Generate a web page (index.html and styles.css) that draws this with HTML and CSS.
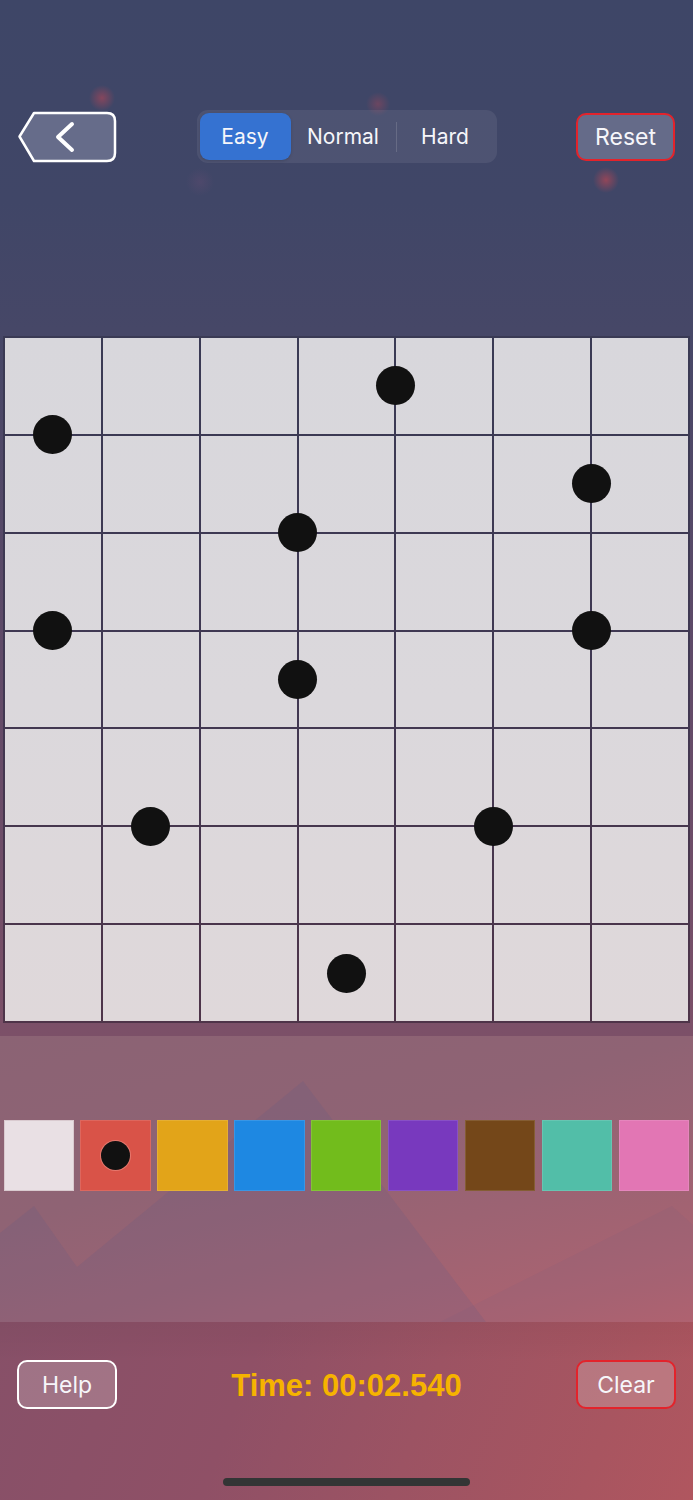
FILE: index.html
```html
<!DOCTYPE html>
<html lang="en">
<head>
<meta charset="utf-8">
<title>Dots Puzzle</title>
<link rel="stylesheet" href="styles.css">
</head>
<body>
<div class="app">
  <header class="header">
    <button class="back" aria-label="Back">
      <svg width="100" height="52" viewBox="0 0 100 52">
        <path d="M2.5,25.5 L17,2 H90 Q98,2 98,10 V42 Q98,50 90,50 H17 Z" fill="#666c8a" stroke="#ffffff" stroke-width="2.5" stroke-linejoin="round"/>
        <path d="M55,13 L41,26 L55,39" fill="none" stroke="#ffffff" stroke-width="4" stroke-linecap="round" stroke-linejoin="round"/>
      </svg>
    </button>
    <div class="segmented">
      <div class="seg seg-easy">Easy</div>
      <div class="seg seg-normal">Normal</div>
      <div class="seg-divider"></div>
      <div class="seg seg-hard">Hard</div>
    </div>
    <button class="btn btn-reset">Reset</button>
  </header>

  <main class="board">
    <div class="cell"></div><div class="cell"></div><div class="cell"></div><div class="cell"></div><div class="cell"></div><div class="cell"></div><div class="cell"></div>
    <div class="cell"></div><div class="cell"></div><div class="cell"></div><div class="cell"></div><div class="cell"></div><div class="cell"></div><div class="cell"></div>
    <div class="cell"></div><div class="cell"></div><div class="cell"></div><div class="cell"></div><div class="cell"></div><div class="cell"></div><div class="cell"></div>
    <div class="cell"></div><div class="cell"></div><div class="cell"></div><div class="cell"></div><div class="cell"></div><div class="cell"></div><div class="cell"></div>
    <div class="cell"></div><div class="cell"></div><div class="cell"></div><div class="cell"></div><div class="cell"></div><div class="cell"></div><div class="cell"></div>
    <div class="cell"></div><div class="cell"></div><div class="cell"></div><div class="cell"></div><div class="cell"></div><div class="cell"></div><div class="cell"></div>
    <div class="cell"></div><div class="cell"></div><div class="cell"></div><div class="cell"></div><div class="cell"></div><div class="cell"></div><div class="cell"></div>

    <span class="dot" style="--x:0.5;--y:1"></span>
    <span class="dot" style="--x:4;--y:0.5"></span>
    <span class="dot" style="--x:6;--y:1.5"></span>
    <span class="dot" style="--x:3;--y:2"></span>
    <span class="dot" style="--x:0.5;--y:3"></span>
    <span class="dot" style="--x:6;--y:3"></span>
    <span class="dot" style="--x:3;--y:3.5"></span>
    <span class="dot" style="--x:1.5;--y:5"></span>
    <span class="dot" style="--x:5;--y:5"></span>
    <span class="dot" style="--x:3.5;--y:6.5"></span>
  </main>

  <section class="panel">
    <svg class="mountains" viewBox="0 0 693 286" preserveAspectRatio="none" aria-hidden="true">
      <polygon points="0,197 34,170 77,231 303,45 486,286 0,286" fill="rgba(80,90,140,0.15)"/>
      <polygon points="440,286 672,170 693,189 693,286" fill="rgba(80,90,140,0.07)"/>
    </svg>
    <div class="palette">
      <div class="swatch sw-white"></div>
      <div class="swatch sw-red"><span class="swatch-dot"></span></div>
      <div class="swatch sw-yellow"></div>
      <div class="swatch sw-blue"></div>
      <div class="swatch sw-green"></div>
      <div class="swatch sw-purple"></div>
      <div class="swatch sw-brown"></div>
      <div class="swatch sw-teal"></div>
      <div class="swatch sw-pink"></div>
    </div>
  </section>

  <footer class="footer">
    <div class="footer-row">
      <button class="btn btn-help">Help</button>
      <div class="timer">Time: 00:02.540</div>
      <button class="btn btn-clear">Clear</button>
    </div>
    <div class="home-indicator"></div>
  </footer>
</div>
</body>
</html>
```

FILE: styles.css
```css
html, body {
  margin: 0;
  padding: 0;
}

body {
  width: 693px;
  height: 1500px;
  overflow: hidden;
  font-family: Inter, "Noto Sans", Roboto, sans-serif;
  background:
    radial-gradient(circle at 102px 98px, rgba(190, 70, 85, 0.55) 0, rgba(190, 70, 85, 0) 13px),
    radial-gradient(circle at 378px 104px, rgba(190, 70, 85, 0.35) 0, rgba(190, 70, 85, 0) 12px),
    radial-gradient(circle at 606px 180px, rgba(200, 70, 80, 0.6) 0, rgba(200, 70, 80, 0) 13px),
    radial-gradient(circle at 200px 182px, rgba(120, 80, 120, 0.25) 0, rgba(120, 80, 120, 0) 14px),
    linear-gradient(to bottom, #3e4667 0px, #404667 200px, #464767 330px, #5e4a68 640px, #7c5068 1036px, #7c5068 1500px);
}

button {
  font-family: inherit;
  padding: 0;
  margin: 0;
  cursor: pointer;
}

.app {
  display: flex;
  flex-direction: column;
  height: 1500px;
}

/* ---------- header ---------- */
.header {
  display: flex;
  justify-content: space-between;
  align-items: center;
  padding: 110px 18px 0 17px;
  height: 53px;
}

.back {
  width: 100px;
  height: 52px;
  border: 0;
  background: none;
  display: block;
}

.back svg {
  display: block;
}

.segmented {
  width: 300px;
  height: 53px;
  box-sizing: border-box;
  padding: 3px;
  border-radius: 11px;
  background: rgba(255, 255, 255, 0.075);
  display: flex;
  align-items: center;
}

.seg {
  height: 47px;
  display: flex;
  align-items: center;
  justify-content: center;
  font-size: 21px;
  color: #f6f6fa;
}

.seg-easy {
  width: 91px;
  background: #3572d1;
  border-radius: 9px;
  box-shadow: 0 1px 3px rgba(0, 0, 0, 0.15);
}

.seg-normal {
  width: 105px;
}

.seg-divider {
  width: 1px;
  height: 30px;
  background: rgba(255, 255, 255, 0.14);
}

.seg-hard {
  width: 97px;
}

.btn {
  width: 100px;
  height: 49px;
  box-sizing: border-box;
  border-radius: 10px;
  font-size: 23px;
  color: #f6f6fa;
  display: flex;
  align-items: center;
  justify-content: center;
}

.btn-reset {
  width: 99px;
  height: 48px;
  border: 2.5px solid #e3232b;
  background: #656b89;
}

/* ---------- board ---------- */
.board {
  position: relative;
  margin: 173px 0 0 3px;
  width: 687px;
  height: 687px;
  box-sizing: border-box;
  padding: 2px;
  display: grid;
  grid-template-columns: repeat(7, 1fr);
  grid-template-rows: repeat(7, 1fr);
  gap: 2px;
  background: linear-gradient(to bottom, #3a3a54 0%, #403852 50%, #4e3449 100%);
}

.cell {
  background: linear-gradient(to bottom, #d8d7dc 336px, #dbd8dc 700px, #dfd8da 1023px) fixed;
}

.dot {
  position: absolute;
  width: 39px;
  height: 39px;
  border-radius: 50%;
  background: #111111;
  left: calc(1px + var(--x) * 97.857px - 19.5px);
  top: calc(1px + var(--y) * 97.857px - 19.5px);
}

/* ---------- palette panel ---------- */
.panel {
  position: relative;
  margin-top: 13px;
  height: 286px;
  box-sizing: border-box;
  padding: 84px 4px 0 3.5px;
  overflow: hidden;
  background: linear-gradient(165deg, #8b6374 0%, #8f6374 40%, #9c6373 65%, #a86371 85%, #b6636e 100%);
}

.mountains {
  position: absolute;
  left: 0;
  top: 0;
  width: 693px;
  height: 286px;
}

.palette {
  position: relative;
  display: grid;
  grid-template-columns: repeat(9, 1fr);
  gap: 6.6px;
  width: 685.5px;
}

.swatch {
  height: 70.5px;
  box-sizing: border-box;
  box-shadow: inset 0 0 0 1px rgba(255, 255, 255, 0.12);
  display: flex;
  align-items: center;
  justify-content: center;
}

.sw-white  { background: #e9e0e4; box-shadow: inset 0 0 0 1px rgba(190, 160, 170, 0.35); }
.sw-red    { background: #d95348; }
.sw-yellow { background: #e2a419; }
.sw-blue   { background: #1e88e2; }
.sw-green  { background: #72bc1c; }
.sw-purple { background: #7839be; }
.sw-brown  { background: #744719; }
.sw-teal   { background: #52bea8; }
.sw-pink   { background: #e276b4; }

.swatch-dot {
  width: 29px;
  height: 29px;
  border-radius: 50%;
  background: #111111;
  box-shadow: 0 0 0 1px rgba(255, 190, 180, 0.35);
}

/* ---------- footer ---------- */
.footer {
  flex: 1;
  display: flex;
  flex-direction: column;
  box-sizing: border-box;
  padding: 38px 17px 0 17px;
  background:
    linear-gradient(to bottom, rgba(0, 0, 0, 0.04), rgba(0, 0, 0, 0) 40px),
    linear-gradient(110deg, #875068 0%, #8f5066 35%, #9c5363 60%, #a85560 85%, #b0565f 100%);
}

.footer-row {
  display: flex;
  justify-content: space-between;
  align-items: center;
  height: 49px;
}

.btn-help {
  border: 2.5px solid #ffffff;
  background: rgba(255, 255, 255, 0.2);
}

.btn-clear {
  border: 2.5px solid #e3232b;
  background: rgba(255, 255, 255, 0.2);
}

.timer {
  font-family: "Liberation Sans", Arial, sans-serif;
  font-weight: bold;
  font-size: 31px;
  color: #f6b300;
  margin-top: 2px;
}

.home-indicator {
  align-self: center;
  margin-top: 69px;
  width: 247px;
  height: 8px;
  border-radius: 4px;
  background: #333535;
}
```
